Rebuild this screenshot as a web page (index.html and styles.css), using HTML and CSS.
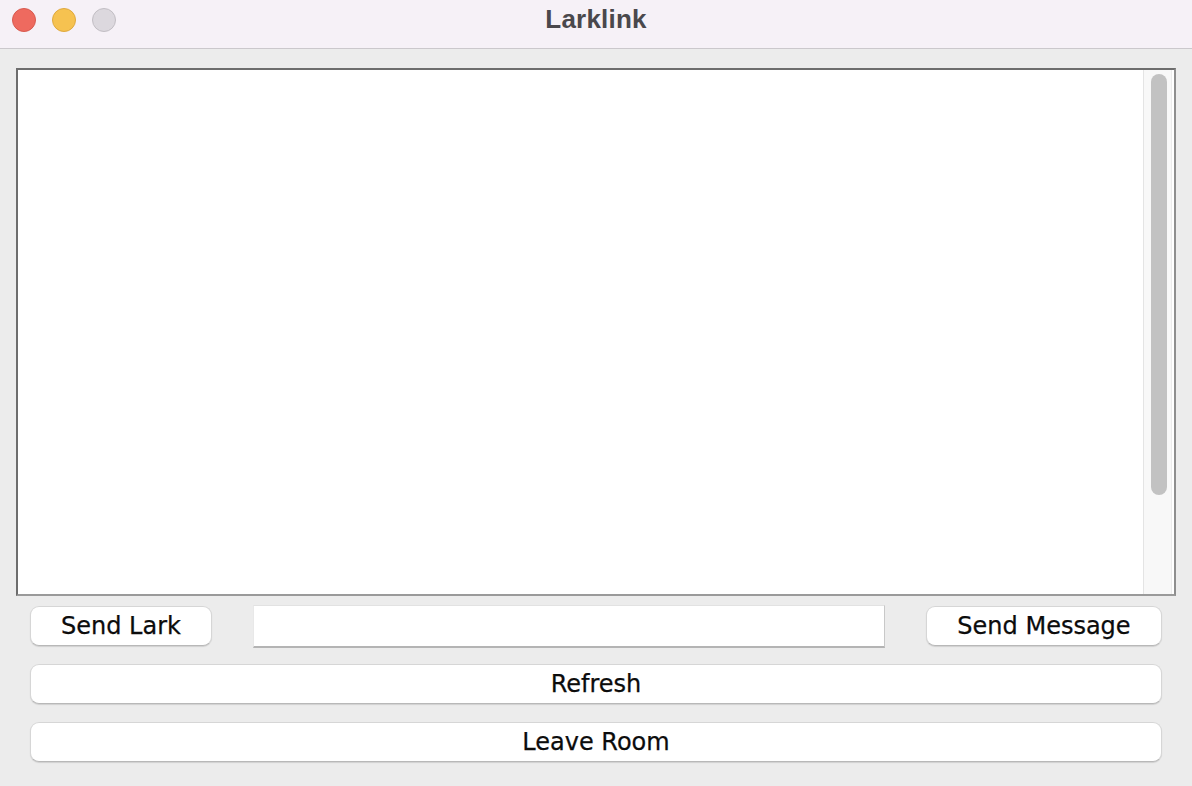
FILE: index.html
```html
<!DOCTYPE html>
<html>
<head>
<meta charset="utf-8">
<title>Larklink</title>
<link rel="stylesheet" href="styles.css">
</head>
<body>
<div class="window">
  <header class="titlebar">
    <div class="lights">
      <span class="light red"></span>
      <span class="light yellow"></span>
      <span class="light gray"></span>
    </div>
    <div class="title">Larklink</div>
    <div class="spacer"></div>
  </header>
  <main class="content">
    <div class="chat">
      <div class="chat-text"></div>
      <div class="scrollbar"><div class="thumb"></div></div>
    </div>
    <div class="controls">
      <div class="row-top">
        <button class="btn btn-lark">Send Lark</button>
        <div class="field"></div>
        <button class="btn btn-send">Send Message</button>
      </div>
      <button class="btn btn-wide btn-refresh">Refresh</button>
      <button class="btn btn-wide btn-leave">Leave Room</button>
    </div>
  </main>
</div>
</body>
</html>
```
FILE: styles.css
```css
html, body {
  margin: 0;
  padding: 0;
  background: #ececec;
}
body {
  width: 1192px;
  height: 786px;
  overflow: hidden;
  font-family: "DejaVu Sans", "Liberation Sans", sans-serif;
}
.window {
  display: flex;
  flex-direction: column;
  height: 786px;
}
.titlebar {
  height: 48px;
  background: #f6f1f7;
  border-bottom: 1px solid #cbc8cc;
  display: grid;
  grid-template-columns: 1fr auto 1fr;
  align-items: center;
  flex-shrink: 0;
}
.lights {
  display: flex;
  gap: 16px;
  padding-left: 12px;
  margin-top: -8px;
}
.light {
  width: 24px;
  height: 24px;
  border-radius: 50%;
  box-sizing: border-box;
  border: 1px solid transparent;
}
.red { background: #ee6a5f; border-color: #d85a4f; }
.yellow { background: #f6c250; border-color: #dfa93e; }
.gray { background: #dcd8de; border-color: #c2bec4; }
.title {
  font-family: "Liberation Sans", Arial, sans-serif;
  font-weight: bold;
  font-size: 26px;
  letter-spacing: 0.2px;
  color: #4a484c;
  margin-top: -10px;
}
.content {
  padding: 19px 16px 0;
}
.chat {
  height: 528px;
  box-sizing: border-box;
  border: 2px solid #6d6d6d;
  border-right-color: #8e8e8e;
  border-bottom-color: #9a9a9a;
  background: #ffffff;
  display: flex;
}
.chat-text {
  flex: 1;
}
.scrollbar {
  width: 29px;
  margin-right: 2px;
  background: #f8f8f8;
  border-left: 1px solid #e4e4e4;
  border-right: 1px solid #ececec;
  padding: 4px 0 0 7px;
  box-sizing: border-box;
}
.thumb {
  width: 16px;
  height: 421px;
  border-radius: 8px;
  background: #c2c2c2;
}
.controls {
  padding: 9px 14px 0;
  display: flex;
  flex-direction: column;
}
.row-top {
  display: flex;
  align-items: flex-start;
  gap: 41px;
  height: 43px;
}
.btn {
  font-family: "DejaVu Sans", "Liberation Sans", sans-serif;
  font-size: 24px;
  color: #0c0c0c;
  -webkit-text-stroke: 0.25px #0c0c0c;
  background: #ffffff;
  border: 1px solid #d6d6d6;
  border-bottom-color: #b8b8b8;
  border-radius: 9px;
  box-shadow: 0 1px 1px rgba(0, 0, 0, 0.12);
  height: 40px;
  padding: 0;
  box-sizing: border-box;
  line-height: 36px;
}
.btn-lark {
  width: 182px;
  margin-top: 1px;
}
.btn-send {
  width: 236px;
  margin-top: 1px;
}
.field {
  flex: 1;
  height: 43px;
  box-sizing: border-box;
  background: #ffffff;
  border-top: 1px solid #e2e2e2;
  border-left: 1px solid #e8e8e8;
  border-right: 1px solid #c8c8c8;
  border-bottom: 2px solid #b4b4b4;
}
.btn-wide {
  width: 100%;
}
.btn-refresh {
  margin-top: 16px;
}
.btn-leave {
  margin-top: 18px;
}
```
